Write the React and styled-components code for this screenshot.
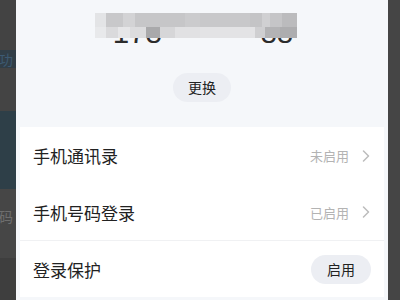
import styled, { createGlobalStyle } from "styled-components";

const GlobalStyle = createGlobalStyle`
  html, body {
    margin: 0;
    padding: 0;
    background: #464646;
  }
  body {
    font-family: "Noto Sans CJK SC", "Noto Sans", sans-serif;
  }
`;

const Screen = styled.div`
  display: flex;
  width: 400px;
  height: 300px;
  overflow: hidden;
`;

const LeftStrip = styled.div`
  width: 16px;
  display: flex;
  flex-direction: column;
  overflow: hidden;
`;

const StripBand = styled.div`
  height: ${(p) => p.$h}px;
  background: ${(p) => p.$bg};
  color: ${(p) => p.$fg || "transparent"};
  font-size: 14px;
  line-height: ${(p) => p.$h}px;
  padding-top: ${(p) => p.$pt || 0}px;
  box-sizing: border-box;
  white-space: nowrap;
  text-indent: -1px;
`;

const RightStrip = styled.div`
  width: 12px;
  background: #454545;
`;

const Panel = styled.div`
  flex: 1;
  background: #f5f7fa;
  display: flex;
  flex-direction: column;
`;

const Header = styled.div`
  height: 127px;
  display: flex;
  flex-direction: column;
  align-items: center;
  padding-top: 16px;
  box-sizing: border-box;
`;

const NumberWrap = styled.div`
  position: relative;
  margin-left: 2px;
`;

const Number = styled.div`
  font-family: "Liberation Sans", Arial, sans-serif;
  font-size: 29.5px;
  color: #2b2b2b;
  line-height: 34px;
  span {
    color: transparent;
  }
`;

const Mosaic = styled.svg`
  position: absolute;
  left: -18px;
  top: -3px;
`;

const PillButton = styled.div`
  height: 29px;
  padding: 0 ${(p) => p.$px || 15}px;
  border-radius: 15px;
  background: #eceef3;
  color: #222;
  font-size: 14px;
  line-height: 29px;
  display: flex;
  align-items: center;
`;

const ChangeButton = styled(PillButton)`
  margin-top: 23px;
`;

const Card = styled.div`
  margin: 0 4px;
  background: #fff;
  display: flex;
  flex-direction: column;
`;

const Row = styled.div`
  height: ${(p) => p.$h || 56}px;
  display: flex;
  align-items: center;
  justify-content: space-between;
  padding: 0 13px 0 13px;
  border-bottom: ${(p) => (p.$divider ? "1px solid #f0f1f3" : "none")};
  box-sizing: border-box;
`;

const Label = styled.div`
  font-size: 17px;
  color: #222;
`;

const Side = styled.div`
  display: flex;
  align-items: center;
  gap: 13px;
  padding-right: 1px;
`;

const Status = styled.div`
  font-size: 13px;
  color: #b3b3b3;
`;

const top = [
  [95, 106, "#e3e4e6"],
  [106, 123, "#c8c8ca"],
  [123, 135, "#d3d3d5"],
  [135, 185, "#c6c6c8"],
  [185, 200, "#cbcbcd"],
  [200, 250, "#c8c8ca"],
  [250, 262, "#c4c4c6"],
  [262, 270, "#d0d0d2"],
  [270, 282, "#c5c5c7"],
  [282, 297, "#bbbbbd"],
];

const bottom = [
  [95, 106, "#e8e9eb"],
  [106, 118, "#dadadc"],
  [118, 130, "#e6e6e8"],
  [130, 146, "#dcdcde"],
  [146, 160, "#a9a9ab"],
  [160, 175, "#d6d6d8"],
  [175, 200, "#e1e1e3"],
  [200, 255, "#e3e3e5"],
  [255, 265, "#cfcfd1"],
  [265, 280, "#b3b3b5"],
  [280, 297, "#adadaf"],
];

const Chevron = () => (
  <svg width="8" height="12" viewBox="0 0 8 12">
    <polyline
      points="1.5,1 6.5,6 1.5,11"
      fill="none"
      stroke="#bcbcbc"
      strokeWidth="1.5"
      strokeLinecap="round"
      strokeLinejoin="round"
    />
  </svg>
);

export default function App() {
  return (
    <>
      <GlobalStyle />
      <Screen>
        <LeftStrip>
          <StripBand $h={50} $bg="#434343" />
          <StripBand $h={18} $bg="#313e47" $fg="#3d5a72">功</StripBand>
          <StripBand $h={43} $bg="#444444" />
          <StripBand $h={78} $bg="#2e3f48" />
          <StripBand $h={50} $bg="#464646" $fg="#6e6e6e" $pt={2}>码</StripBand>
          <StripBand $h={19} $bg="#464646" />
          <StripBand $h={42} $bg="#3e3e3e" />
        </LeftStrip>
        <Panel>
          <Header>
            <NumberWrap>
              <Number>
                178<span>000000</span>88
              </Number>
              <Mosaic width="202" height="25" viewBox="95 13 202 25">
                {top.map(([a, b, c]) => (
                  <rect key={"t" + a} x={a} y={13} width={b - a} height={14} fill={c} />
                ))}
                {bottom.map(([a, b, c]) => (
                  <rect key={"b" + a} x={a} y={27} width={b - a} height={11} fill={c} />
                ))}
              </Mosaic>
            </NumberWrap>
            <ChangeButton>更换</ChangeButton>
          </Header>
          <Card>
            <Row $h={57}>
              <Label>手机通讯录</Label>
              <Side>
                <Status>未启用</Status>
                <Chevron />
              </Side>
            </Row>
            <Row $h={57} $divider>
              <Label>手机号码登录</Label>
              <Side>
                <Status>已启用</Status>
                <Chevron />
              </Side>
            </Row>
            <Row $h={56}>
              <Label>登录保护</Label>
              <PillButton $px={16}>启用</PillButton>
            </Row>
          </Card>
        </Panel>
        <RightStrip />
      </Screen>
    </>
  );
}
